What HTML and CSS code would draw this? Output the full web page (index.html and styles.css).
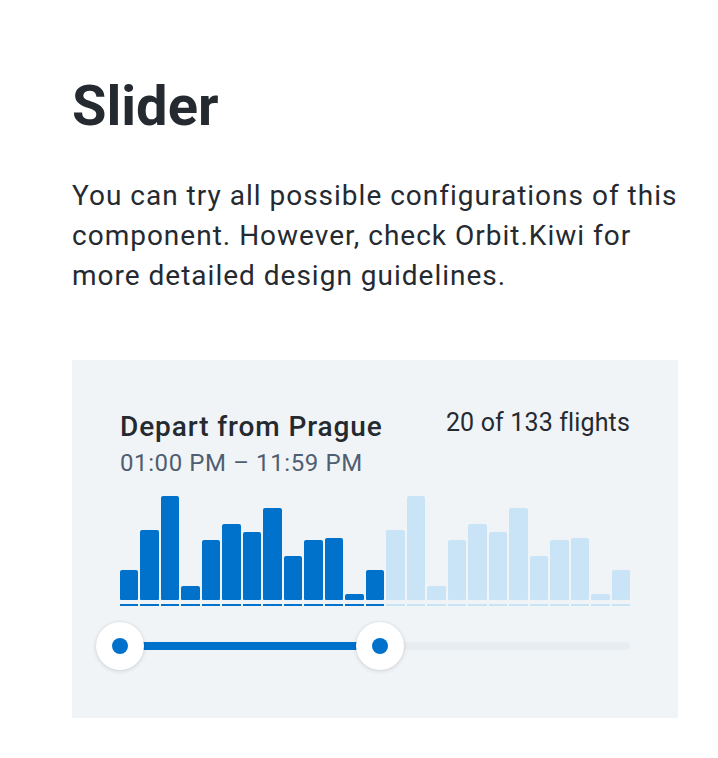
FILE: index.html
```html
<!DOCTYPE html>
<html lang="en">
<head>
<meta charset="utf-8">
<title>Slider</title>
<link rel="stylesheet" href="styles.css">
</head>
<body>
<main class="page">
  <h1 class="title">Slider</h1>
  <p class="lead">You can try all possible configurations of this component. However, check Orbit.Kiwi for more detailed design guidelines.</p>
  <section class="card">
    <div class="card-head">
      <div class="labels">
        <div class="label">Depart from Prague</div>
        <div class="value">01:00 PM – 11:59 PM</div>
      </div>
      <div class="count">20 of 133 flights</div>
    </div>
    <div class="histogram">
      <div class="bars">
        <span class="bar on" style="height:30px"></span>
        <span class="bar on" style="height:70px"></span>
        <span class="bar on" style="height:104px"></span>
        <span class="bar on" style="height:14px"></span>
        <span class="bar on" style="height:60px"></span>
        <span class="bar on" style="height:76px"></span>
        <span class="bar on" style="height:68px"></span>
        <span class="bar on" style="height:92px"></span>
        <span class="bar on" style="height:44px"></span>
        <span class="bar on" style="height:60px"></span>
        <span class="bar on" style="height:62px"></span>
        <span class="bar on" style="height:6px"></span>
        <span class="bar on" style="height:30px"></span>
        <span class="bar" style="height:70px"></span>
        <span class="bar" style="height:104px"></span>
        <span class="bar" style="height:14px"></span>
        <span class="bar" style="height:60px"></span>
        <span class="bar" style="height:76px"></span>
        <span class="bar" style="height:68px"></span>
        <span class="bar" style="height:92px"></span>
        <span class="bar" style="height:44px"></span>
        <span class="bar" style="height:60px"></span>
        <span class="bar" style="height:62px"></span>
        <span class="bar" style="height:6px"></span>
        <span class="bar" style="height:30px"></span>
      </div>
      <div class="ticks">
        <span class="tick on"></span><span class="tick on"></span><span class="tick on"></span><span class="tick on"></span><span class="tick on"></span><span class="tick on"></span><span class="tick on"></span><span class="tick on"></span><span class="tick on"></span><span class="tick on"></span><span class="tick on"></span><span class="tick on"></span><span class="tick on"></span>
        <span class="tick"></span><span class="tick"></span><span class="tick"></span><span class="tick"></span><span class="tick"></span><span class="tick"></span><span class="tick"></span><span class="tick"></span><span class="tick"></span><span class="tick"></span><span class="tick"></span><span class="tick"></span>
      </div>
    </div>
    <div class="slider">
      <div class="rail">
        <div class="fill" style="left:0;width:260px"></div>
      </div>
      <span class="handle" style="left:0"><span class="dot"></span></span>
      <span class="handle" style="left:260px"><span class="dot"></span></span>
    </div>
  </section>
</main>
</body>
</html>
```
FILE: styles.css
```css
* { box-sizing: border-box; }
html, body { margin: 0; padding: 0; background: #ffffff; }
body {
  font-family: Roboto, "Liberation Sans", Arial, sans-serif;
  color: #252a31;
}
.page {
  padding: 72px 0 40px 72px;
}
.title {
  margin: 0;
  font-size: 56px;
  line-height: 68px;
  font-weight: 700;
  color: #252a31;
}
.lead {
  margin: 36px 0 0;
  width: 612px;
  font-size: 28px;
  line-height: 40px;
  letter-spacing: 1px;
  font-weight: 400;
  color: #252a31;
}
.card {
  margin-top: 64px;
  width: 606px;
  background: #f1f4f7;
  padding: 48px;
}
.card-head {
  display: flex;
  justify-content: space-between;
  align-items: flex-start;
}
.label {
  font-size: 28px;
  line-height: 38px;
  letter-spacing: 0.9px;
  font-weight: 500;
  color: #252a31;
}
.value {
  font-size: 24px;
  line-height: 34px;
  letter-spacing: 0.6px;
  color: #4f5e71;
}
.count {
  font-size: 25px;
  line-height: 30px;
  letter-spacing: 0.15px;
  color: #252a31;
}
.histogram {
  margin-top: 16px;
}
.bars {
  display: flex;
  align-items: flex-end;
  gap: 2px;
  height: 104px;
}
.bar {
  flex: 1 1 0;
  background: #c9e3f7;
  border-radius: 2px 2px 1px 1px;
}
.bar.on { background: #0172cb; }
.ticks {
  display: flex;
  gap: 2px;
  margin-top: 4px;
}
.tick {
  flex: 1 1 0;
  height: 2px;
  background: #c9e3f7;
}
.tick.on { background: #0172cb; }
.slider {
  position: relative;
  height: 48px;
  margin-top: 16px;
  display: flex;
  align-items: center;
}
.rail {
  position: relative;
  width: 100%;
  height: 8px;
  border-radius: 4px;
  background: #e8edf1;
}
.fill {
  position: absolute;
  top: 0;
  height: 8px;
  background: #0172cb;
}
.handle {
  position: absolute;
  top: 0;
  width: 48px;
  height: 48px;
  margin-left: -24px;
  border-radius: 50%;
  background: #ffffff;
  box-shadow: 0 1px 4px rgba(37, 42, 49, 0.16), 0 0 2px rgba(37, 42, 49, 0.08);
  display: flex;
  align-items: center;
  justify-content: center;
}
.dot {
  width: 16px;
  height: 16px;
  border-radius: 50%;
  background: #0172cb;
}
```
